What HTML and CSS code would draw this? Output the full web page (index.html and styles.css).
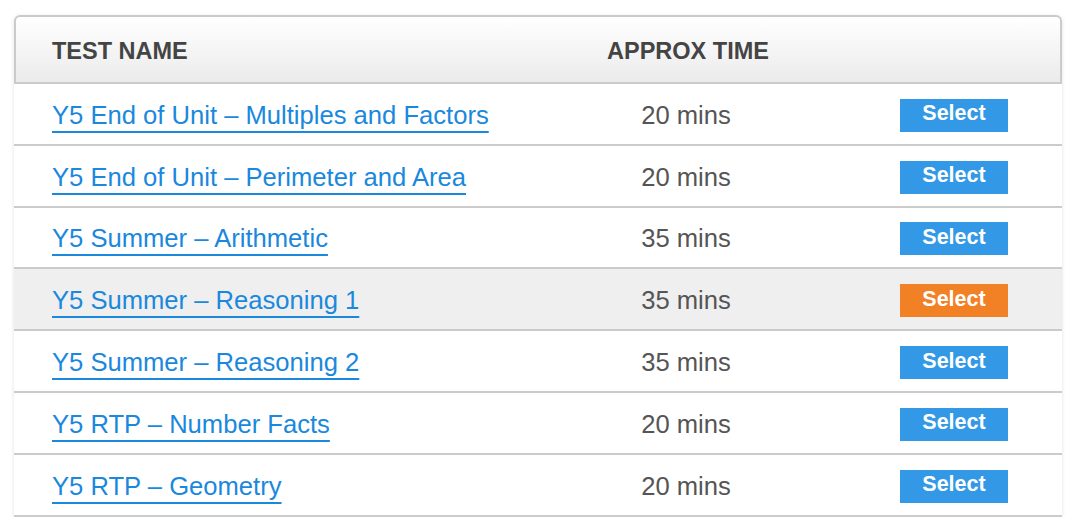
FILE: index.html
```html
<!DOCTYPE html>
<html lang="en">
<head>
<meta charset="utf-8">
<title>Tests</title>
<link rel="stylesheet" href="styles.css">
</head>
<body>
<div class="page">
  <div class="table">
    <div class="row head">
      <div class="c-name">TEST NAME</div>
      <div class="c-time">APPROX TIME</div>
      <div class="c-act"></div>
    </div>
    <div class="row">
      <div class="c-name"><a href="#">Y5 End of Unit – Multiples and Factors</a></div>
      <div class="c-time">20 mins</div>
      <div class="c-act"><button class="btn">Select</button></div>
    </div>
    <div class="row">
      <div class="c-name"><a href="#">Y5 End of Unit – Perimeter and Area</a></div>
      <div class="c-time">20 mins</div>
      <div class="c-act"><button class="btn">Select</button></div>
    </div>
    <div class="row">
      <div class="c-name"><a href="#">Y5 Summer – Arithmetic</a></div>
      <div class="c-time">35 mins</div>
      <div class="c-act"><button class="btn">Select</button></div>
    </div>
    <div class="row active">
      <div class="c-name"><a href="#">Y5 Summer – Reasoning 1</a></div>
      <div class="c-time">35 mins</div>
      <div class="c-act"><button class="btn btn-hot">Select</button></div>
    </div>
    <div class="row">
      <div class="c-name"><a href="#">Y5 Summer – Reasoning 2</a></div>
      <div class="c-time">35 mins</div>
      <div class="c-act"><button class="btn">Select</button></div>
    </div>
    <div class="row">
      <div class="c-name"><a href="#">Y5 RTP – Number Facts</a></div>
      <div class="c-time">20 mins</div>
      <div class="c-act"><button class="btn">Select</button></div>
    </div>
    <div class="row">
      <div class="c-name"><a href="#">Y5 RTP – Geometry</a></div>
      <div class="c-time">20 mins</div>
      <div class="c-act"><button class="btn">Select</button></div>
    </div>
  </div>
</div>
</body>
</html>
```

FILE: styles.css
```css
* { box-sizing: border-box; }
html, body { margin: 0; padding: 0; background: #fff; }
body { font-family: "Liberation Sans", Arial, Helvetica, sans-serif; }

.page { padding: 15px 14px 0 14px; }

.table {
  width: 1048px;
  border-radius: 6px 6px 0 0;
  box-shadow: 0 1px 4px rgba(0,0,0,0.12);
  background: #fff;
}

.row {
  display: grid;
  grid-template-columns: 572px 200px 1fr;
  align-items: center;
  height: 61.8px;
  padding-top: 3px;
  border-bottom: 2px solid #cbcbcb;
}

.row.head {
  height: 69px;
  border: 2px solid #cbcbcb;
  border-radius: 6px 6px 0 0;
  background: linear-gradient(#ffffff, #ebebeb);
  font-weight: bold;
  font-size: 23.5px;
  color: #444;
  padding-top: 3px;
  padding-bottom: 0;
}

.row.active { background: #efefef; }

.c-name { padding-left: 38px; }
.head .c-name { padding-left: 36px; }

.c-time {
  text-align: center;
  font-size: 25.6px;
  color: #555;
}
.head .c-time { font-size: 23.5px; color: #444; }

.c-act {
  display: flex;
  justify-content: flex-end;
  padding-right: 54px;
}

a {
  font-size: 25.6px;
  color: #1a88dd;
  text-decoration: underline;
  text-decoration-thickness: 1.5px;
  text-underline-offset: 7px;
}

.btn {
  width: 108px;
  height: 33px;
  border: 0;
  border-radius: 0;
  background: #3399e6;
  color: #fff;
  font-family: "Liberation Sans", Arial, Helvetica, sans-serif;
  font-weight: bold;
  font-size: 21.5px;
  padding: 0 0 3px 0;
  cursor: pointer;
}
.btn-hot { background: #f28025; }
```
